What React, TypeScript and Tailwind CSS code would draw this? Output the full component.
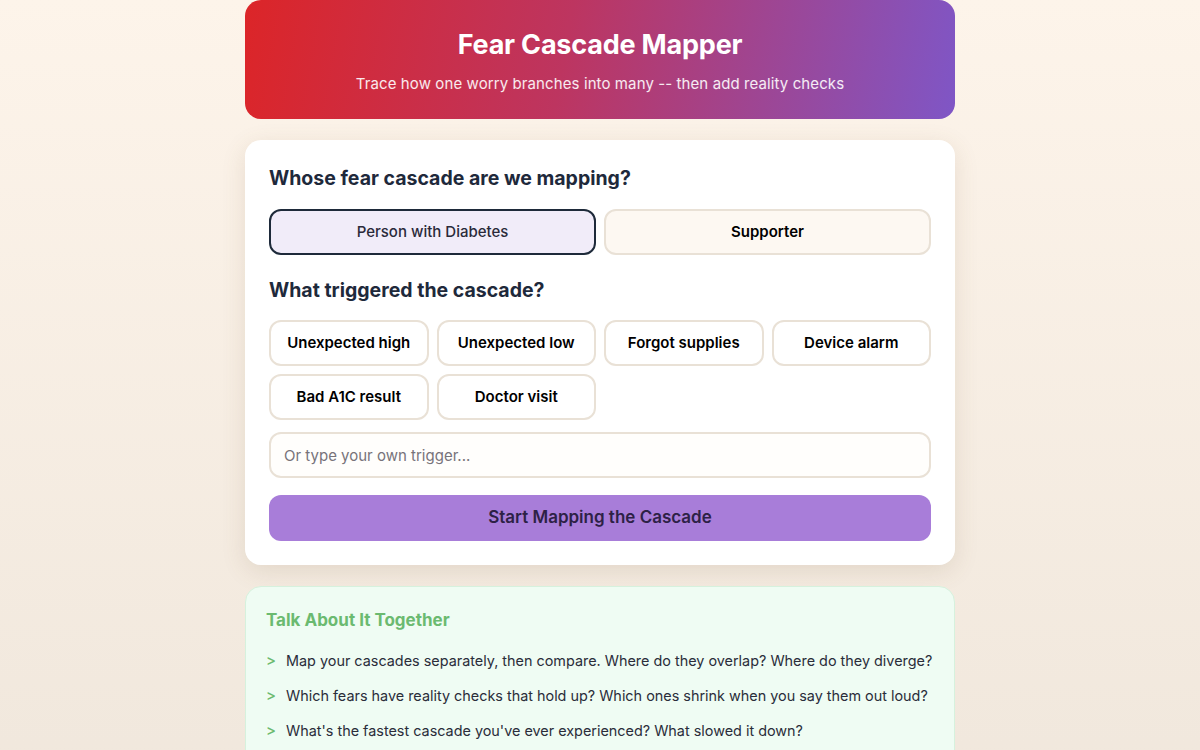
import { useState } from "react";

const TRIGGERS = [
    "Unexpected high",
    "Unexpected low",
    "Forgot supplies",
    "Device alarm",
    "Bad A1C result",
    "Doctor visit",
];

const PROMPTS = [
    "Map your cascades separately, then compare. Where do they overlap? Where do they diverge?",
    "Which fears have reality checks that hold up? Which ones shrink when you say them out loud?",
    "What's the fastest cascade you've ever experienced? What slowed it down?",
];

const heading = "font-['Inter','Noto_Sans',sans-serif]";

export default function App() {
    const [role, setRole] = useState<"pwd" | "supporter">("pwd");
    const [trigger, setTrigger] = useState<string | null>(null);
    const [custom, setCustom] = useState("");

    return (
        <div className="min-h-[750px] bg-gradient-to-b from-[#fdf4ea] to-[#f0e7dc] font-['Inter','Noto_Sans',sans-serif]">
            <div className="mx-auto flex w-[710px] flex-col gap-[21px] pb-10">
                {/* header */}
                <header className="flex h-[119px] flex-col items-center justify-center rounded-2xl bg-[linear-gradient(100deg,#dc2528_0%,#bd3560_45%,#7f56c6_100%)] text-white">
                    <h1 className={`${heading} mt-[3px] text-[27px] font-bold leading-8 tracking-[-0.2px]`}>
                        Fear Cascade Mapper
                    </h1>
                    <p className="mt-[13px] text-[15px] leading-5 tracking-[0.1px] text-white/90">
                        Trace how one worry branches into many -- then add reality checks
                    </p>
                </header>

                {/* setup card */}
                <section className="rounded-2xl bg-white px-6 pb-6 pt-[26px] shadow-[0_6px_24px_rgba(120,90,60,0.14)]">
                    <h2 className={`${heading} text-[19.5px] font-bold leading-6 text-[#1e293b]`}>
                        Whose fear cascade are we mapping?
                    </h2>
                    <div className="mt-[19px] grid grid-cols-2 gap-2">
                        <button
                            onClick={() => setRole("pwd")}
                            className={`h-[46px] rounded-xl border-2 text-[15px] font-medium ${
                                role === "pwd"
                                    ? "border-[#1e2a3a] bg-[#f1ecf9] text-[#2a2a3a]"
                                    : "border-[#e9e1d6] bg-[#fdf8f2] text-black"
                            }`}
                        >
                            Person with Diabetes
                        </button>
                        <button
                            onClick={() => setRole("supporter")}
                            className={`h-[46px] rounded-xl border-2 text-[15px] font-semibold ${
                                role === "supporter"
                                    ? "border-[#1e2a3a] bg-[#f1ecf9] text-[#2a2a3a]"
                                    : "border-[#e9e1d6] bg-[#fdf8f2] text-black"
                            }`}
                        >
                            Supporter
                        </button>
                    </div>

                    <h2 className={`${heading} mt-[23px] text-[19.5px] font-bold leading-6 text-[#1e293b]`}>
                        What triggered the cascade?
                    </h2>
                    <div className="mt-[18px] grid grid-cols-4 gap-2">
                        {TRIGGERS.map((t) => (
                            <button
                                key={t}
                                onClick={() => setTrigger(t)}
                                className={`h-[46px] rounded-xl border-2 text-[15px] font-semibold text-black ${
                                    trigger === t ? "border-[#1e2a3a] bg-[#f1ecf9]" : "border-[#e9e1d6] bg-white"
                                }`}
                            >
                                {t}
                            </button>
                        ))}
                    </div>

                    <input
                        value={custom}
                        onChange={(e) => setCustom(e.target.value)}
                        placeholder="Or type your own trigger..."
                        className="mt-3 h-[46px] w-full rounded-xl border-2 border-[#e9e1d6] bg-[#fffefc] px-[13px] text-[15px] text-[#333] placeholder:text-[#77737a] focus:outline-none"
                    />

                    <button className="mt-[17px] h-[46px] w-full rounded-xl bg-[#a87dd9] text-[17px] font-semibold text-[#2d2146]">
                        Start Mapping the Cascade
                    </button>
                </section>

                {/* discussion card */}
                <section className="rounded-2xl border border-[#d6f1dd] bg-[#effcf3] px-[20px] pb-6 pt-[21px]">
                    <h3 className={`${heading} text-[17px] font-bold leading-6 text-[#6bba70]`}>
                        Talk About It Together
                    </h3>
                    <ul className="mt-[19px] flex flex-col gap-[15px]">
                        {PROMPTS.map((p) => (
                            <li key={p} className="flex items-center gap-[10px] whitespace-nowrap text-[14.4px] leading-5 text-[#2a2d3a]">
                                <span className="text-[15px] font-medium text-[#6bba70]">&gt;</span>
                                <span>{p}</span>
                            </li>
                        ))}
                    </ul>
                </section>
            </div>
        </div>
    );
}
